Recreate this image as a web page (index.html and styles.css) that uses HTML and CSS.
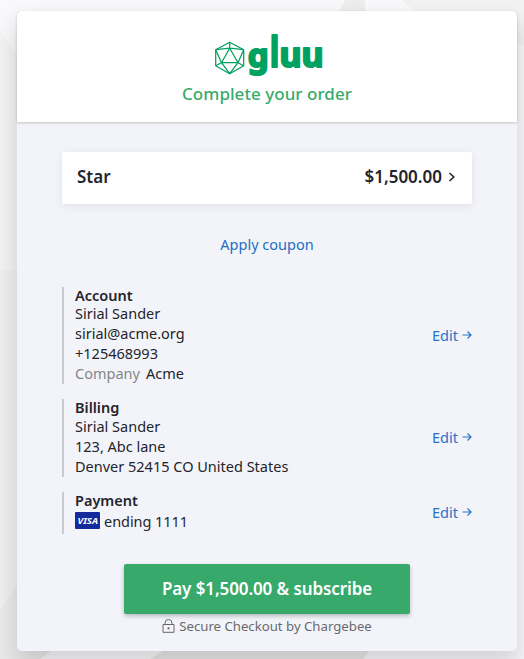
FILE: index.html
```
<!DOCTYPE html>
<html lang="en">
<head>
<meta charset="utf-8">
<title>Complete your order</title>
<link rel="stylesheet" href="styles.css">
</head>
<body>
<svg class="backdrop" width="524" height="659" viewBox="0 0 524 659" aria-hidden="true">
  <path d="M345 0H364Q367 10 365 20H335Z" fill="#ededed"/>
  <path d="M401 0H524V45Q440 35 401 0Z" fill="#f2f2f2"/>
  <path d="M0 30Q8 46 20 58V270H0Z" fill="#f4f4f5"/>
  <path d="M0 270H20V580L0 610Z" fill="#f0f0f0"/>
  <path d="M0 610L20 580H60V645L40 659H0Z" fill="#ebebeb"/>
  <path d="M165 650H370L363 659H150Z" fill="#e8e8e8"/>
</svg>
<main class="card">
  <header class="head">
    <svg class="logo" width="112" height="62" viewBox="0 -12 112 62" role="img" aria-label="gluu">
      <g fill="none" stroke="#00a161" stroke-width="1.25" stroke-linejoin="round">
        <path d="M16.700 10.200L30.700 17.700V33.700L16.700 41.700L2.700 33.700V17.700Z"/>
        <path d="M16.700 10.200V16.200M2.700 17.700L16.700 16.200L30.700 17.700M16.700 16.200L8.500 30.700H25ZM2.700 17.700L8.500 30.700L2.700 33.700M30.700 17.700L25 30.700L30.700 33.700M8.500 30.700L16.700 41.700L25 30.700"/>
      </g>
      <g class="wordmark"><text class="low" x="34.800" y="34.500">g</text><text class="tall" x="56" y="34.500">l</text><text x="66.500" y="34.500">u</text><text x="88.500" y="34.500">u</text></g>
    </svg>
    <h1 class="title">Complete your order</h1>
  </header>
  <div class="content">
    <div class="plan">
      <span class="plan-name">Star</span>
      <span class="plan-price">$1,500.00</span>
      <svg class="chevron" width="8" height="12" viewBox="0 0 8 12"><path d="M1.500 2L5.800 6L1.500 10" fill="none" stroke="#23242c" stroke-width="1.600"/></svg>
    </div>
    <a class="coupon">Apply coupon</a>
    <section class="block account">
      <div class="details">
        <h2>Account</h2>
        <p>Sirial Sander</p>
        <p>sirial@acme.org</p>
        <p>+125468993</p>
        <p><span class="muted">Company</span><span class="company">Acme</span></p>
      </div>
      <a class="edit"><span>Edit</span><svg width="10" height="10" viewBox="0 0 10 10"><path d="M0.500 5H9M5.500 1.500L9 5L5.500 8.500"/></svg></a>
    </section>
    <section class="block billing">
      <div class="details">
        <h2>Billing</h2>
        <p>Sirial Sander</p>
        <p>123, Abc lane</p>
        <p>Denver 52415 CO United States</p>
      </div>
      <a class="edit"><span>Edit</span><svg width="10" height="10" viewBox="0 0 10 10"><path d="M0.500 5H9M5.500 1.500L9 5L5.500 8.500"/></svg></a>
    </section>
    <section class="block payment">
      <div class="details">
        <h2>Payment</h2>
        <p class="pay-line"><svg width="25" height="17" viewBox="0 0 25 17"><rect width="25" height="17" rx="1" fill="#142a9c"/><text class="visa" x="2.500" y="12" textLength="20.500" lengthAdjust="spacingAndGlyphs">VISA</text></svg><span class="ending">ending 1111</span></p>
      </div>
      <a class="edit"><span>Edit</span><svg width="10" height="10" viewBox="0 0 10 10"><path d="M0.500 5H9M5.500 1.500L9 5L5.500 8.500"/></svg></a>
    </section>
    <button class="pay">Pay $1,500.00 &amp; subscribe</button>
    <p class="secure"><svg width="13" height="14" viewBox="0 0 13 14"><path d="M1 5.500H12V13.300H1ZM3 5.500V4A3.500 3.500 0 0 1 10 4V5.500" fill="none" stroke="#666" stroke-width="1" stroke-linejoin="round"/><circle cx="6.500" cy="9.400" r="1.100" fill="#666"/></svg><span>Secure Checkout by Chargebee</span></p>
  </div>
</main>
</body>
</html>
```
FILE: styles.css
```
* { box-sizing: border-box; }
html, body { margin: 0; height: 659px; overflow: hidden; }
body {
  position: relative;
  padding: 11px 7px 8px 17px;
  background: #f9f9fb;
  color: #23242c;
  font-family: "Noto Sans", "Open Sans", sans-serif;
  font-size: 14.5px;
  font-weight: 380;
}
h1, h2, p { margin: 0; white-space: nowrap; }
.backdrop { position: absolute; left: 0; top: 0; }
.card {
  position: relative;
  width: 500px;
  height: 640px;
  border-radius: 5px;
  background: #f3f4f9;
  box-shadow: 0 14px 24px 2px rgba(0, 0, 0, .15);
}
.head {
  height: 111px;
  display: flex;
  flex-direction: column;
  align-items: center;
  padding-top: 9px;
  background: #fff;
  border-radius: 5px 5px 0 0;
  box-shadow: 0 1px 3px rgba(0, 0, 0, .2);
}
.logo { display: block; flex: none; margin-left: 4px; }
.wordmark {
  font-family: "Noto Sans", sans-serif;
  font-size: 34px;
  font-weight: 700;
  fill: #00a161;
  stroke: #00a161;
  stroke-width: 2px;
  stroke-linejoin: round;
}
.low { font-size: 33px; }
.tall { font-size: 41px; font-weight: 500; }
.title {
  font-size: 17px;
  line-height: 24px;
  font-weight: 550;
  letter-spacing: .04px;
  color: #38ab6a;
}
.content {
  display: flex;
  flex-direction: column;
  padding: 30px 45px 0;
}
.plan {
  height: 52px;
  display: flex;
  align-items: center;
  padding: 0 16px 3px 15px;
  background: #fff;
  border-radius: 2px;
  box-shadow: 0 2px 8px rgba(0, 0, 0, .08);
  font-size: 17px;
  font-weight: 600;
}
.plan-price { margin-left: auto; }
.chevron { margin-left: 6px; }
.coupon {
  align-self: center;
  margin-top: 30px;
  height: 21px;
  line-height: 21px;
  color: #1d6fc4;
}
.block {
  display: flex;
  align-items: center;
  justify-content: space-between;
  padding-left: 11px;
  border-left: 2px solid #c9cbcb;
}
.account { height: 97px; margin-top: 32px; }
.billing { height: 78px; margin-top: 15px; }
.payment { height: 42px; margin-top: 15px; }
.details { line-height: 20px; padding-bottom: 2px; }
.details h2 { font-size: 14.5px; line-height: 17px; font-weight: 600; }
.account h2 { line-height: 16px; }
.company { margin-left: 6px; }
.muted { color: #85868a; }
.edit { display: flex; align-items: center; gap: 4px; padding-bottom: 2px; color: #2673c8; }
.edit path { fill: none; stroke: #2673c8; stroke-width: 1.2; }
.pay-line { display: flex; align-items: center; height: 24px; }
.visa { font: italic 700 9.5px "Noto Sans", sans-serif; fill: #fff; }
.ending { margin-left: 4px; letter-spacing: -.05px; }
.pay {
  align-self: center;
  width: 286px;
  height: 50px;
  margin-top: 30px;
  padding: 0 0 2px;
  border: 0;
  border-radius: 2px;
  background: #36a96b;
  box-shadow: 0 2px 4px rgba(0, 0, 0, .25);
  color: #fff;
  font: 600 17px "Noto Sans", sans-serif;
  letter-spacing: -.1px;
}
.secure {
  display: flex;
  align-items: center;
  align-self: center;
  margin-top: 2px;
  height: 20px;
  gap: 4px;
  font-size: 13.2px;
  color: #68696c;
}
```
